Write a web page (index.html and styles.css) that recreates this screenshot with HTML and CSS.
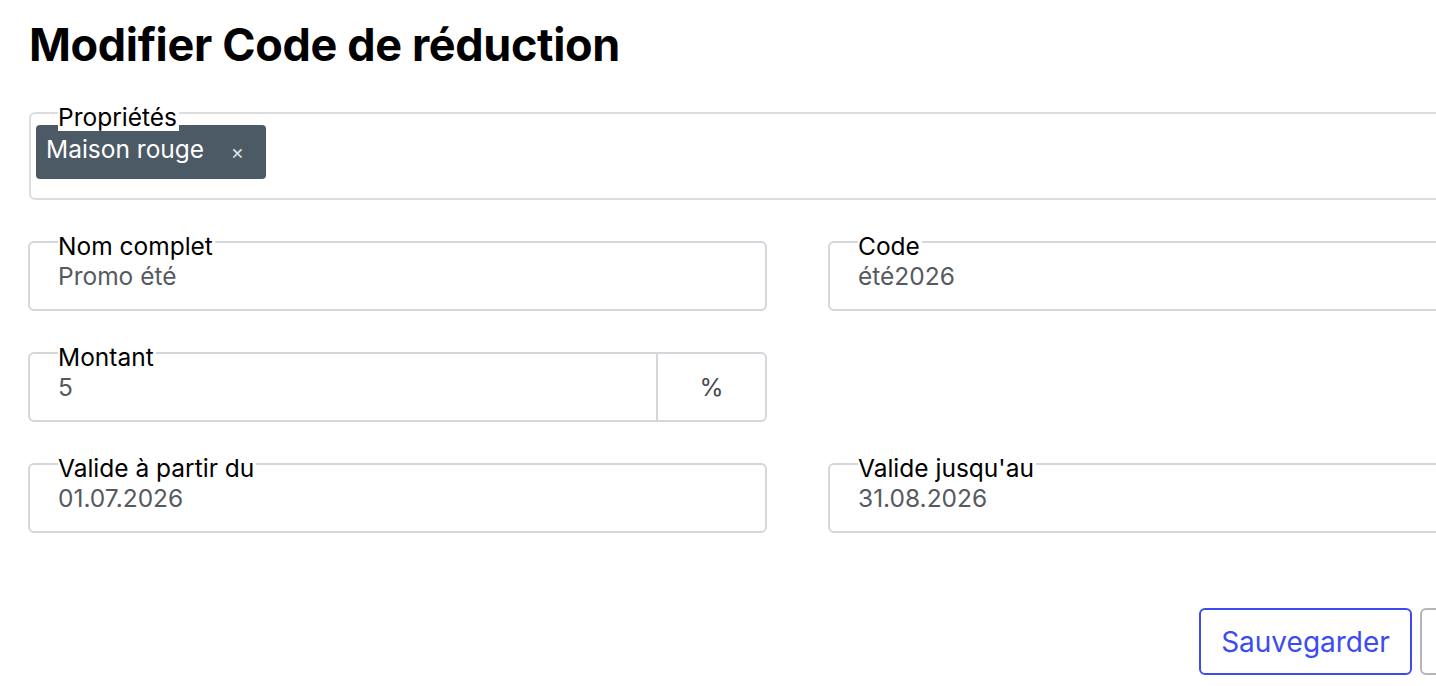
FILE: index.html
```html
<!DOCTYPE html>
<html lang="fr">
<head>
<meta charset="utf-8">
<title>Modifier Code de réduction</title>
<link rel="stylesheet" href="styles.css">
</head>
<body>
<div class="page">
  <h1 class="title">Modifier Code de réduction</h1>
  <form class="form">
    <div class="field field-wide props">
      <span class="label">Propriétés</span>
      <div class="chips">
        <span class="chip">Maison rouge <span class="chip-x">×</span></span>
      </div>
    </div>
    <div class="field">
      <span class="label">Nom complet</span>
      <span class="value">Promo été</span>
    </div>
    <div class="field">
      <span class="label">Code</span>
      <span class="value">été2026</span>
    </div>
    <div class="field field-addon">
      <div class="addon-main">
        <span class="label">Montant</span>
        <span class="value">5</span>
      </div>
      <div class="addon">%</div>
    </div>
    <div class="spacer"></div>
    <div class="field">
      <span class="label">Valide à partir du</span>
      <span class="value">01.07.2026</span>
    </div>
    <div class="field">
      <span class="label">Valide jusqu'au</span>
      <span class="value">31.08.2026</span>
    </div>
    <div class="actions">
      <button type="button" class="btn btn-primary">Sauvegarder</button>
      <button type="button" class="btn btn-secondary">Annuler</button>
    </div>
  </form>
</div>
</body>
</html>
```
FILE: styles.css
```css
html, body {
  margin: 0;
  padding: 0;
  background: #fff;
  overflow: hidden;
}
body {
  font-family: "Inter", "Noto Sans", sans-serif;
  color: #111;
}
.page {
  padding: 18px 0 0 28px;
  width: 1539px;
}
.title {
  margin: 0 0 0 1px;
  font-size: 45px;
  font-weight: 700;
  letter-spacing: -0.35px;
  line-height: 54px;
  color: #000;
}
.form {
  margin-top: 40px;
  display: grid;
  grid-template-columns: 739px 739px;
  column-gap: 61px;
  row-gap: 41px;
}
.field {
  border: 2px solid #d3d7db;
  border-radius: 6px;
  height: 70px;
  box-sizing: border-box;
  padding: 0 0 0 28px;
  display: flex;
  flex-direction: column;
  align-items: flex-start;
}
.label {
  display: inline-block;
  background: #fff;
  font-size: 24.5px;
  line-height: 28px;
  margin-top: -11px;
  padding-right: 2px;
  color: #000;
}
.value {
  font-size: 24.5px;
  line-height: 28px;
  color: #555a60;
  margin-top: 2px;
}
.field-wide {
  grid-column: 1 / 3;
}
.props {
  margin-left: 1px;
  height: 88px;
  border-color: #dddddd;
  padding-left: 5px;
}
.props .label {
  margin-left: 22px;
  position: relative;
  z-index: 1;
}
.chips {
  display: flex;
  margin-top: -6px;
}
.chip {
  display: inline-flex;
  align-items: center;
  background: #4b5a65;
  color: #fff;
  border-radius: 4px;
  height: 54px;
  padding: 0 22px 6px 10px;
  font-size: 24.5px;
  box-sizing: border-box;
  width: 230px;
}
.chip-x {
  font-size: 20px;
  margin-left: auto;
  margin-top: 6px;
  color: #dfe3e6;
}
.field-addon {
  flex-direction: row;
  align-items: stretch;
  padding: 0;
}
.addon-main {
  flex: 1;
  display: flex;
  flex-direction: column;
  align-items: flex-start;
  padding-left: 28px;
  border-right: 2px solid #d3d7db;
}
.addon {
  width: 107px;
  display: flex;
  align-items: center;
  justify-content: center;
  font-size: 24.5px;
  color: #444a50;
}
.actions {
  grid-column: 1 / 3;
  display: flex;
  justify-content: flex-end;
  gap: 8px;
  margin-top: 34px;
}
.btn {
  font-family: "Inter", "Noto Sans", sans-serif;
  font-size: 28px;
  line-height: 30px;
  height: 67px;
  border-radius: 6px;
  background: #fff;
  box-sizing: border-box;
  padding: 0;
}
.btn-primary {
  border: 2px solid #3c4cf0;
  color: #3c4cf0;
  width: 213px;
}
.btn-secondary {
  border: 2px solid #b5b5b5;
  color: #444;
  width: 147px;
}
```
